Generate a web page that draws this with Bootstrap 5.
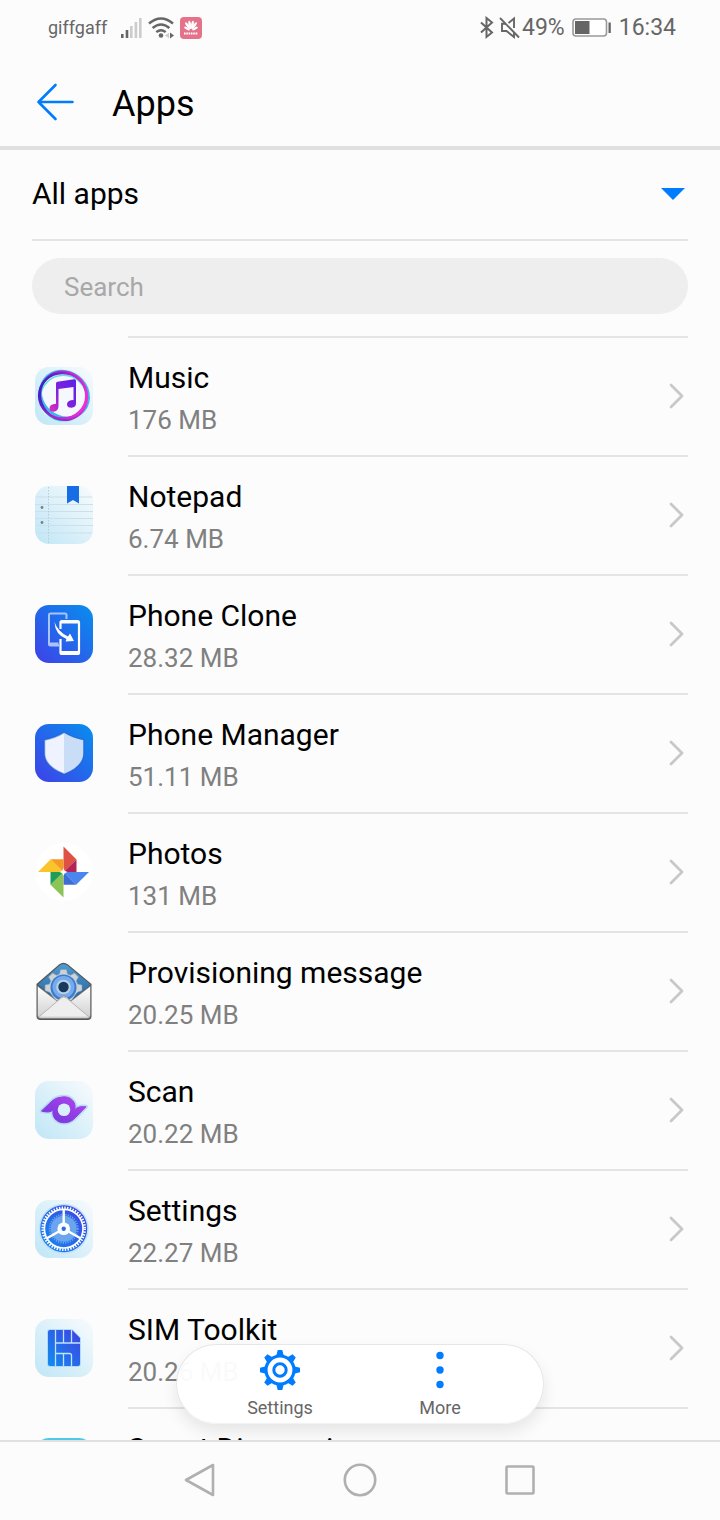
<!DOCTYPE html>
<html lang="en">
<head>
<meta charset="utf-8">
<meta name="viewport" content="width=device-width, initial-scale=1">
<title>Apps</title>
<link href="https://cdn.jsdelivr.net/npm/bootstrap@5.3.0/dist/css/bootstrap.min.css" rel="stylesheet">
<style>
  :root { --page: #fcfcfc; --rule: #e4e4e4; --ink-soft: #666; }
  body { font-family: Roboto, "Liberation Sans", sans-serif; background: var(--page); color: #000; }
  svg { display: block; flex: none; }
  .status-bar { height: 56px; padding: 0 44px 0 48px; color: var(--ink-soft); font-size: 23px; line-height: 28px; }
  .status-left { gap: 5px; }
  .status-right { gap: 7px; }
  .status-glyphs { gap: 4px; margin-right: -6px; }
  .carrier { font-size: 18px; margin-right: 8px; }
  .title-bar { height: 94px; padding: 2px 32px 0; border-bottom: 4px solid #e0e0e0; }
  .title-bar h1 { font-size: 36px; line-height: 44px; font-weight: 400; margin-left: 34px; padding-top: 4px; }
  .filter { margin: 0 32px; border-bottom: 2px solid var(--rule); }
  .filter-select { height: 89px; padding: 0 0 2px; font-size: 30px; line-height: 40px; background: none; color: #000; appearance: none; }
  .filter-caret { right: 3px; pointer-events: none; }
  .search { padding: 17px 32px 22px; }
  .search-box { height: 56px; padding: 2px 32px 0; font-size: 26px; line-height: 40px; background: #eee; }
  .search-box:focus { background: #eee; }
  .search-box::placeholder { color: #a8a8a8; }
  .app-row { padding: 0 32px; color: #000; }
  .app-icon { width: 96px; padding-left: 3px; }
  .app-body { border-top: 2px solid var(--rule); padding-right: 4px; }
  .app-text { min-height: 117px; padding: 19px 0 14px; }
  .app-name { font-size: 30px; line-height: 42px; }
  .app-size { font-size: 26px; line-height: 42px; color: #808080; }
  .dock { bottom: 16px; width: 368px; height: 80px; padding: 0 23px; border: 1px solid #e6e6e6; border-bottom-color: #f2f2f2; background: rgba(255,255,255,.96); box-shadow: 0 8px 16px rgba(0,0,0,.09); }
  .dock-btn { padding: 5px 0 0; font-size: 18px; line-height: 24px; color: var(--ink-soft); }
  .dock-btn span { padding-top: 6px; }
  .nav-keys { height: 80px; padding: 0 120px 2px; border-top: 2px solid #e0e0e0; }
  .nav-keys .btn { color: #b0b0b0; }
</style>
</head>
<body class="vh-100 d-flex flex-column overflow-hidden">

<svg width="0" height="0" class="position-absolute" aria-hidden="true">
  <defs>
    <linearGradient id="pale" x1="1" y1="0" x2="0" y2="1"><stop offset="0" stop-color="#f8fbfd"/><stop offset="1" stop-color="#bfe6f6"/></linearGradient>
    <linearGradient id="deep" x1="1" y1="0" x2="0" y2="1"><stop offset="0" stop-color="#078fee"/><stop offset="1" stop-color="#3f41e8"/></linearGradient>
    <linearGradient id="ring" x1="0" y1=".3" x2="1" y2=".7"><stop offset="0" stop-color="#3a1fc4"/><stop offset=".45" stop-color="#a025d0"/><stop offset="1" stop-color="#f32fd8"/></linearGradient>
    <linearGradient id="note" x1="0" y1="1" x2="1" y2="0"><stop offset="0" stop-color="#e02fc0"/><stop offset=".45" stop-color="#8321dd"/><stop offset="1" stop-color="#5a22e6"/></linearGradient>
    <linearGradient id="violet" x1="1" y1="0" x2="0" y2="1"><stop offset="0" stop-color="#b347ec"/><stop offset="1" stop-color="#6e35dc"/></linearGradient>
    <linearGradient id="sim" x1="1" y1="0" x2="0" y2="1"><stop offset="0" stop-color="#4040e2"/><stop offset="1" stop-color="#118ef0"/></linearGradient>
    <linearGradient id="paper" x1="0" y1="0" x2="0" y2="1"><stop offset="0" stop-color="#fff"/><stop offset="1" stop-color="#cfcfcf"/></linearGradient>
    <linearGradient id="flap" x1="0" y1="0" x2="0" y2="1"><stop offset="0" stop-color="#4f9ad2"/><stop offset="1" stop-color="#1c5b94"/></linearGradient>
    <symbol id="chevron" viewBox="0 0 16 28"><path d="M3 2 14 13 3 24" fill="none" stroke="#c8c8c8" stroke-width="2.800" stroke-linecap="round" stroke-linejoin="round"/></symbol>
  </defs>
</svg>

<div class="status-bar d-flex align-items-center justify-content-between flex-shrink-0">
  <div class="status-left d-flex align-items-center">
    <span class="carrier">giffgaff</span>
    <svg width="22" height="22" viewBox="0 0 22 22"><path d="M1 17h2.600v4H1zM5.700 13h2.600v8H5.700z" fill="#666"/><path d="M10 9h2.600v12H10zM14.600 5h2.600v16h-2.600zM19 1h2.600v20H19z" fill="#ccc"/></svg>
    <svg width="28" height="24" viewBox="0 0 28 24"><g fill="none" stroke="#666" stroke-width="2.400"><path d="M2 7.500Q14-2.500 26 7.500"/><path d="M5.600 12Q14 5 22.400 12"/><path d="M9.300 16.200Q14 12.300 18.700 16.200"/></g><circle cx="14" cy="19.500" r="2.300" fill="#666"/><path d="m18 19.500 4-2.800v5.600z" fill="#ccc"/><path d="M23 16.500v6l4-3z" fill="#666"/></svg>
    <svg width="22" height="22" viewBox="0 0 22 22"><rect width="22" height="22" rx="4" fill="#e4728a"/><g fill="#fff"><ellipse cx="7" cy="11.500" rx="3.200" ry="1.200" transform="rotate(28 7 11.500)"/><ellipse cx="7.700" cy="8.600" rx="4" ry="1.300" transform="rotate(55 7.700 8.600)"/><ellipse cx="9.800" cy="7.800" rx="1.300" ry="4.200" transform="rotate(-9 9.800 7.800)"/><ellipse cx="12.400" cy="7.800" rx="1.300" ry="4.200" transform="rotate(9 12.400 7.800)"/><ellipse cx="14.300" cy="8.600" rx="4" ry="1.300" transform="rotate(-55 14.300 8.600)"/><ellipse cx="15" cy="11.500" rx="3.200" ry="1.200" transform="rotate(-28 15 11.500)"/></g><path d="M4 16.500h14" stroke="#fff" stroke-width="2" stroke-dasharray="1.600 .7"/></svg>
  </div>
  <div class="status-right d-flex align-items-center">
    <div class="status-glyphs d-flex align-items-center">
      <svg width="16" height="24" viewBox="0 0 16 24"><path d="m2 6.500 11 10-5.500 4.500V2L13 6.500l-11 10" fill="none" stroke="#666" stroke-width="2"/></svg>
      <svg width="22" height="24" viewBox="0 0 22 24"><g fill="none" stroke="#666" stroke-width="1.900"><path d="M1 2 20 21.500"/><path d="M7 7.800H3V15h4.500l7.500 6v-4.500M9.500 7 15 2.500V12"/></g></svg>
    </div>
    <span>49%</span>
    <svg width="40" height="20" viewBox="0 0 40 20"><rect x="1" y="1" width="33.500" height="17" rx="3" fill="#fff" stroke="#999" stroke-width="1.600"/><path d="M3 3h14.500v13H3zM36.500 4.500h2.300v10.500h-2.300z" fill="#666"/></svg>
    <time>16:34</time>
  </div>
</div>

<header class="title-bar d-flex align-items-center flex-shrink-0">
  <button type="button" class="btn p-0 border-0" aria-label="Back">
    <svg width="46" height="40" viewBox="0 0 46 40"><path d="M23.500 3 6.500 20l17 17M6.500 20h34" fill="none" stroke="#007dff" stroke-width="2.600" stroke-linecap="round" stroke-linejoin="round"/></svg>
  </button>
  <h1 class="mb-0">Apps</h1>
</header>

<main class="position-relative flex-fill overflow-hidden">
  <div class="filter position-relative">
    <select id="filter" aria-label="Filter" class="filter-select w-100 border-0"><option>All apps</option></select>
    <svg class="filter-caret position-absolute top-50 translate-middle-y" width="24" height="14" viewBox="0 0 24 14"><path d="M0 0h24L12 12z" fill="#007dff"/></svg>
  </div>
  <div class="search">
    <input id="search" type="search" aria-label="Search" class="search-box form-control rounded-pill border-0" placeholder="Search">
  </div>

  <div class="app-list">
    <a href="#music" class="app-row d-flex align-items-stretch text-decoration-none">
      <span class="app-icon d-flex align-items-center flex-shrink-0"><svg width="58" height="58" viewBox="0 0 58 58">
        <rect width="58" height="58" rx="14" fill="url(#pale)"/>
        <circle cx="28.700" cy="29" r="22.500" fill="#f5f8fd"/>
        <g fill="none">
          <ellipse cx="28.700" cy="28.500" rx="26" ry="22.500" transform="rotate(-42 28.700 28.500)" stroke="#eaf6fc" stroke-width="1"/>
          <ellipse cx="29.500" cy="27.500" rx="25" ry="22.300" transform="rotate(38 29.500 27.500)" stroke="#3fb6ea" stroke-width="2.800"/>
          <ellipse cx="28.500" cy="31" rx="23" ry="22.800" stroke="#5be3df" stroke-width="1.600"/>
          <ellipse cx="28.500" cy="28.800" rx="23.200" ry="24.300" transform="rotate(-32 28.500 28.800)" stroke="url(#ring)" stroke-width="2.400"/>
          <ellipse cx="27.600" cy="28.800" rx="23.600" ry="22.600" stroke="url(#ring)" stroke-width="2.200"/>
        </g>
        <path d="M21 16.500q0-1.500 1.500-1.800l16.500-2.400q2-.3 2 1.700v22.500q0 4-4.500 4.200-4.500 0-4.500-3.500 0-4 6.500-4.200V20l-15 2v17.500q-.5 5-5 5.300-4 0-4-3.500 0-4.300 6.500-4.600z" fill="url(#note)"/>
      </svg></span>
      <span class="app-body d-flex align-items-center flex-fill"><span class="app-text flex-fill"><span class="app-name d-block">Music</span><span class="app-size d-block">176 MB</span></span><svg width="16" height="28"><use href="#chevron"/></svg></span>
    </a>

    <a href="#notepad" class="app-row d-flex align-items-stretch text-decoration-none">
      <span class="app-icon d-flex align-items-center flex-shrink-0"><svg width="58" height="58" viewBox="0 0 58 58">
        <rect width="58" height="58" rx="14" fill="url(#pale)"/>
        <path d="M1 11h56M0 18.500h58M0 25.500h58M0 32.500h58M0 39.500h58M1 47h56" stroke="#cbe0e9"/>
        <path d="M13.500 1v56" stroke="#b8ccd5" stroke-dasharray="1.500 1.500"/>
        <circle cx="7" cy="21.500" r="1.400" fill="#71838c"/><circle cx="7" cy="36.500" r="1.400" fill="#71838c"/>
        <path d="M32 0h12v17.500L38 14l-6 3.500z" fill="#176de5"/>
      </svg></span>
      <span class="app-body d-flex align-items-center flex-fill"><span class="app-text flex-fill"><span class="app-name d-block">Notepad</span><span class="app-size d-block">6.74 MB</span></span><svg width="16" height="28"><use href="#chevron"/></svg></span>
    </a>

    <a href="#phone-clone" class="app-row d-flex align-items-stretch text-decoration-none">
      <span class="app-icon d-flex align-items-center flex-shrink-0"><svg width="58" height="58" viewBox="0 0 58 58">
        <rect width="58" height="58" rx="14" fill="url(#deep)"/>
        <path d="M31.500 14V10q0-1.500-1.500-1.500H15.500Q14 8.500 14 10v29q0 1.500 1.500 1.500H24M14 38.500h9.500" fill="none" stroke="#a9c4fa" stroke-width="2"/>
        <path d="M25.500 24v-6.500q0-1.500 1.500-1.500h15.500q1.500 0 1.500 1.500v30q0 1.500-1.500 1.500H27q-1.500 0-1.500-1.500V34" fill="none" stroke="#fff" stroke-width="2.200"/>
        <path d="M26 17h17M26 47.500h17" stroke="#fff" stroke-width="3"/>
        <path d="M19.500 17q3 9.500 13.500 14.500l2-3 4 7.500-8.500.5 1-2.500Q20 29.500 19.500 17z" fill="#fff"/>
      </svg></span>
      <span class="app-body d-flex align-items-center flex-fill"><span class="app-text flex-fill"><span class="app-name d-block">Phone Clone</span><span class="app-size d-block">28.32 MB</span></span><svg width="16" height="28"><use href="#chevron"/></svg></span>
    </a>

    <a href="#phone-manager" class="app-row d-flex align-items-stretch text-decoration-none">
      <span class="app-icon d-flex align-items-center flex-shrink-0"><svg width="58" height="58" viewBox="0 0 58 58">
        <rect width="58" height="58" rx="14" fill="url(#deep)"/>
        <path d="M29 8.500q-9 5.500-19.500 7.500v13q0 13.500 19.500 21 19.500-7.500 19.500-21V16Q38 14 29 8.500z" fill="#eef3ff" stroke="#1d5ccc" stroke-opacity=".5" stroke-width="1.500"/>
        <path d="M29 9.200Q38 14.500 48 16.500V29Q48 42 29 49.500z" fill="#c9def6"/>
      </svg></span>
      <span class="app-body d-flex align-items-center flex-fill"><span class="app-text flex-fill"><span class="app-name d-block">Phone Manager</span><span class="app-size d-block">51.11 MB</span></span><svg width="16" height="28"><use href="#chevron"/></svg></span>
    </a>

    <a href="#photos" class="app-row d-flex align-items-stretch text-decoration-none">
      <span class="app-icon d-flex align-items-center flex-shrink-0"><svg width="58" height="58" viewBox="0 0 58 58">
        <circle cx="29" cy="29" r="29" fill="#fff"/>
        <path d="M28.500 3.500 41.500 16.500 28.500 29z" fill="#de5145"/><path d="M41.500 16.500V29h-13z" fill="#b32358"/>
        <path d="M54 29 41.200 41.700 28.500 29z" fill="#4a86ee"/><path d="M28.500 29v12.700h12.700z" fill="#3b6fd6"/>
        <path d="M28.500 54.500 15.500 41.700 28.500 29z" fill="#8cc456"/><path d="M15.500 29h13l-13 12.700z" fill="#1d9d58"/>
        <path d="M3 29 15.700 16.200 28.500 29z" fill="#fcc42b"/><path d="M15.700 16.200h12.800V29z" fill="#f59a23"/>
        <path d="m28.500 25 1.200 2.800 2.800 1.200-2.800 1.200-1.200 2.800-1.200-2.800-2.800-1.200 2.800-1.200z" fill="#fff"/>
      </svg></span>
      <span class="app-body d-flex align-items-center flex-fill"><span class="app-text flex-fill"><span class="app-name d-block">Photos</span><span class="app-size d-block">131 MB</span></span><svg width="16" height="28"><use href="#chevron"/></svg></span>
    </a>

    <a href="#provisioning" class="app-row d-flex align-items-stretch text-decoration-none">
      <span class="app-icon d-flex align-items-center flex-shrink-0"><svg width="58" height="58" viewBox="0 0 58 58">
        <path d="M1.500 22 24 2.500q4.500-3.500 9 0L56.500 22v32q0 4-4 4h-47q-4 0-4-4z" fill="#555"/>
        <path d="M3 22.500 24.500 3.500q4-3 8 0L55.500 22.500 29 45z" fill="url(#flap)"/>
        <path d="m25.500 7.500h6l1 4.500 3 1.200 4-2.200 4 4-2.200 3.800 1.200 3.200 4.500 1v5.500l-5 2L36 39H21l-6-8.500-5-2V23l4.500-1 1.200-3.200-2.200-3.800 4-4 4 2.200 3-1.200z" fill="#ccd2d7" stroke="#7f9cb2" stroke-width=".6"/>
        <circle cx="28.500" cy="25.500" r="13" fill="#3b7ccc"/><circle cx="28.500" cy="25" r="11" fill="#75abee"/>
        <circle cx="28.500" cy="25" r="7.300" fill="#b9d0e4"/><circle cx="28.500" cy="25" r="5.200" fill="#173a5c"/>
        <path d="M2.500 24 22 39l4-4q2.700-2 5.500 0l4.500 4 19.500-15v29q0 3.500-3.500 3.500H6q-3.500 0-3.500-3.500z" fill="url(#paper)" stroke="#777" stroke-width=".7"/>
        <path d="M4.500 54.500 26 36q2.700-2 5.500 0l22 18.500" fill="#eee" stroke="#b5b5b5"/>
      </svg></span>
      <span class="app-body d-flex align-items-center flex-fill"><span class="app-text flex-fill"><span class="app-name d-block">Provisioning message</span><span class="app-size d-block">20.25 MB</span></span><svg width="16" height="28"><use href="#chevron"/></svg></span>
    </a>

    <a href="#scan" class="app-row d-flex align-items-stretch text-decoration-none">
      <span class="app-icon d-flex align-items-center flex-shrink-0"><svg width="58" height="58" viewBox="0 0 58 58">
        <defs><path id="eye" d="M6.500 30 17.500 19.500Q22 15.800 29 15.800c8 0 12.500 6.500 10.800 13Q43 24.800 51 25.800L40.500 36.500Q36 41.800 29 41.800c-8 0-12.500-6.500-10.800-13Q15 32.500 6.500 30z" stroke-linejoin="round"/></defs>
        <rect width="58" height="58" rx="14" fill="url(#pale)"/>
        <use href="#eye" fill="#b9dcf5" stroke="#b9dcf5" stroke-width="4"/>
        <use href="#eye" fill="url(#violet)" stroke="url(#violet)" stroke-width="1"/>
        <circle cx="29" cy="28.800" r="6.300" fill="#d9effa"/>
      </svg></span>
      <span class="app-body d-flex align-items-center flex-fill"><span class="app-text flex-fill"><span class="app-name d-block">Scan</span><span class="app-size d-block">20.22 MB</span></span><svg width="16" height="28"><use href="#chevron"/></svg></span>
    </a>

    <a href="#settings" class="app-row d-flex align-items-stretch text-decoration-none">
      <span class="app-icon d-flex align-items-center flex-shrink-0"><svg width="58" height="58" viewBox="0 0 58 58">
        <rect width="58" height="58" rx="14" fill="url(#pale)"/>
        <circle cx="28.700" cy="28.700" r="25" fill="#c2e1f6"/><circle cx="28.700" cy="28.700" r="23.500" fill="url(#sim)"/>
        <circle cx="28.700" cy="28.700" r="21" fill="none" stroke="#fff" stroke-width="2.600" stroke-dasharray="1.400 1.350"/>
        <circle cx="28.700" cy="28.700" r="19.300" fill="none" stroke="#fff" stroke-width="1.600"/>
        <circle cx="28.700" cy="28.700" r="13" fill="#6aa6ee"/><circle cx="28.700" cy="28.700" r="14" fill="none" stroke="#6aa6ee" stroke-width="2" stroke-dasharray="1.200 1.200"/>
        <path d="M28.700 9v19.700L11.500 38.500M28.700 28.700l17.200 9.800" fill="none" stroke="#fff" stroke-width="2.400"/>
        <circle cx="28.700" cy="28.700" r="6.300" fill="#fff"/><circle cx="28.700" cy="28.700" r="2.200" fill="#2b6be5"/>
      </svg></span>
      <span class="app-body d-flex align-items-center flex-fill"><span class="app-text flex-fill"><span class="app-name d-block">Settings</span><span class="app-size d-block">22.27 MB</span></span><svg width="16" height="28"><use href="#chevron"/></svg></span>
    </a>

    <a href="#sim-toolkit" class="app-row d-flex align-items-stretch text-decoration-none">
      <span class="app-icon d-flex align-items-center flex-shrink-0"><svg width="58" height="58" viewBox="0 0 58 58">
        <rect width="58" height="58" rx="14" fill="url(#pale)"/>
        <path d="M15 11h22l8 8v26q0 2-2 2H15q-2 0-2-2V13q0-2 2-2z" fill="url(#sim)" stroke="#a5d5f5" stroke-width="1.600" paint-order="stroke"/>
        <path d="M20.500 11v36M20.500 24H45M28.500 11v13M36.500 11v13M20.500 34.500h14q2 0 2 2V47M28.500 34.500V47" fill="none" stroke="#bfe3fa" stroke-width="1.300"/>
      </svg></span>
      <span class="app-body d-flex align-items-center flex-fill"><span class="app-text flex-fill"><span class="app-name d-block">SIM Toolkit</span><span class="app-size d-block">20.26 MB</span></span><svg width="16" height="28"><use href="#chevron"/></svg></span>
    </a>

    <a href="#smart-diagnosis" class="app-row d-flex align-items-stretch text-decoration-none">
      <span class="app-icon d-flex align-items-center flex-shrink-0"><svg width="58" height="58" viewBox="0 0 58 58"><rect width="58" height="58" rx="14" fill="#4cc9e6"/></svg></span>
      <span class="app-body d-flex align-items-center flex-fill"><span class="app-text flex-fill"><span class="app-name d-block">Smart Diagnosis</span></span></span>
    </a>
  </div>

  <div class="dock position-absolute start-50 translate-middle-x d-flex rounded-pill">
    <button type="button" class="dock-btn btn border-0 flex-fill w-50 d-flex flex-column align-items-center">
      <svg width="40" height="40" viewBox="-20 -20 40 40"><g fill="#007dff"><g id="cog"><path id="teeth" d="M-2.300-20h4.600L3.800-14h-7.600zM-2.300 20h4.600L3.800 14h-7.600z"/><use href="#teeth" transform="rotate(90)"/></g><use href="#cog" transform="rotate(45)"/></g><circle r="14" fill="#fff" stroke="#007dff" stroke-width="3.200"/><circle r="6.200" fill="none" stroke="#007dff" stroke-width="3"/></svg>
      <span>Settings</span>
    </button>
    <button type="button" class="dock-btn btn border-0 flex-fill w-50 d-flex flex-column align-items-center">
      <svg width="40" height="40" viewBox="-20 -20 40 40" fill="#007dff"><circle cy="-14.500" r="3.700"/><circle r="3.700"/><circle cy="14.500" r="3.700"/></svg>
      <span>More</span>
    </button>
  </div>
</main>

<nav class="nav-keys d-flex flex-shrink-0" aria-label="System">
  <button type="button" class="btn border-0 flex-fill w-100 p-0 d-flex justify-content-center align-items-center" aria-label="Back"><svg width="36" height="36" viewBox="0 0 36 36"><path d="M31 3v30L4 18z" fill="none" stroke="currentColor" stroke-width="2.600" stroke-linejoin="round"/></svg></button>
  <button type="button" class="btn border-0 flex-fill w-100 p-0 d-flex justify-content-center align-items-center" aria-label="Home"><svg width="36" height="36" viewBox="0 0 36 36"><circle cx="18" cy="18" r="15.200" fill="none" stroke="currentColor" stroke-width="2.600"/></svg></button>
  <button type="button" class="btn border-0 flex-fill w-100 p-0 d-flex justify-content-center align-items-center" aria-label="Recent apps"><svg width="36" height="36" viewBox="0 0 36 36"><rect x="4.500" y="4.500" width="27" height="27" rx="1" fill="none" stroke="currentColor" stroke-width="2.600"/></svg></button>
</nav>

<script src="https://cdn.jsdelivr.net/npm/bootstrap@5.3.0/dist/js/bootstrap.bundle.min.js"></script>
</body>
</html>
